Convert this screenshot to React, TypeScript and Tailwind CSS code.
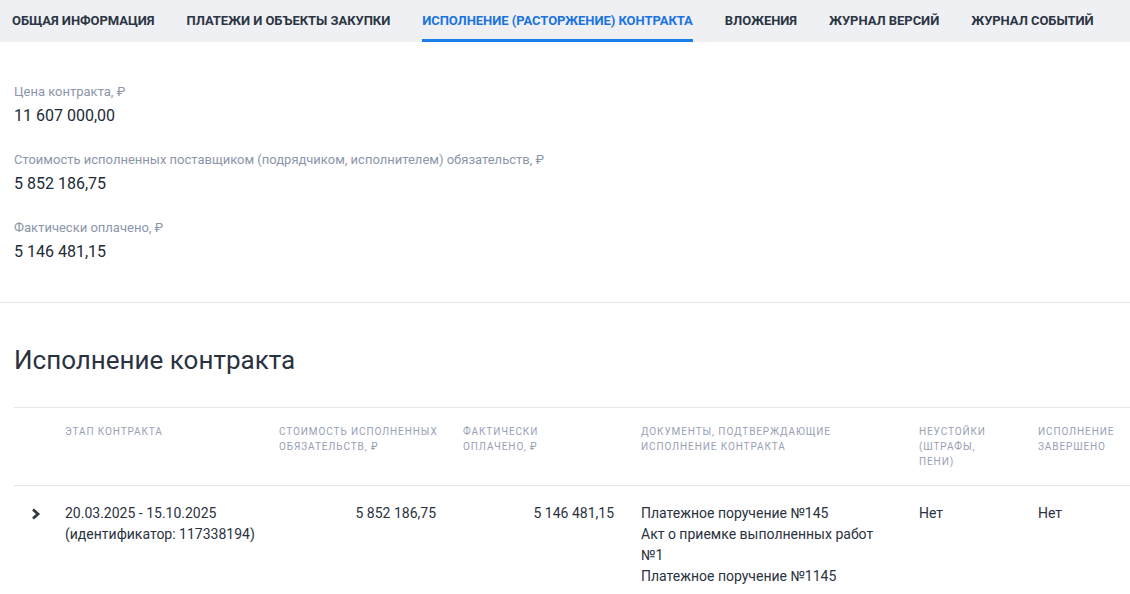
const TABS = [
  "Общая информация",
  "Платежи и объекты закупки",
  "Исполнение (расторжение) контракта",
  "Вложения",
  "Журнал версий",
  "Журнал событий",
];

const SUMMARY = [
  { label: "Цена контракта, ₽", value: "11 607 000,00" },
  { label: "Стоимость исполненных поставщиком (подрядчиком, исполнителем) обязательств, ₽", value: "5 852 186,75" },
  { label: "Фактически оплачено, ₽", value: "5 146 481,15" },
];

const COLS = "grid grid-cols-[51px_214px_184px_178px_278px_119px_1fr]";

export default function App() {
  return (
    <div className="w-[1130px] h-[594px] overflow-hidden bg-white text-[#212b36]" style={{ fontFamily: "Roboto, 'Liberation Sans', sans-serif" }}>
      <div className="flex h-[42px] bg-[#eef0f3] pl-[12px] gap-[32px]">
        {TABS.map((t, i) => (
          <div
            key={t}
            className={`flex items-center h-full whitespace-nowrap text-[13px] font-bold uppercase tracking-[-0.05px] border-b-[3px] pt-[3px] ${
              i === 2 ? "text-[#1a73e0] border-[#1a7ee6]" : "text-[#2c3543] border-transparent"
            }`}
          >
            {t}
          </div>
        ))}
      </div>

      <div className="px-[14px] pt-[41px] pb-[38px] border-b border-[#e4e6ee] flex flex-col gap-[23px]">
        {SUMMARY.map((s) => (
          <div key={s.label}>
            <div className="text-[13px] leading-[18px] text-[#8c96ab]">{s.label}</div>
            <div className="mt-[3px] text-[16px] leading-[24px]">{s.value}</div>
          </div>
        ))}
      </div>

      <div className="pl-[14px]">
        <h2 className="mt-[41px] text-[26px] leading-[32px] text-[#2a3240]">Исполнение контракта</h2>

        <div className="mt-[31px] border-t border-[#e4e6ee]">
          <div className={`${COLS} pt-[16px] pb-[16px] border-b border-[#e4e6ee] text-[10px] leading-[15px] uppercase tracking-[0.9px] text-[#98a0b6]`}>
            <div />
            <div>Этап контракта</div>
            <div className="pr-[20px]">Стоимость исполненных обязательств, ₽</div>
            <div className="pr-[60px]">Фактически оплачено, ₽</div>
            <div className="pr-[50px]">Документы, подтверждающие исполнение контракта</div>
            <div className="pr-[50px]">Неустойки (штрафы, пени)</div>
            <div className="pr-[10px]">Исполнение завершено</div>
          </div>

          <div className={`${COLS} pt-[17px] text-[14px] leading-[21px] text-[#2a3240]`}>
            <div className="flex justify-center pt-[2px]">
              <svg width="14" height="18" viewBox="0 0 14 18" className="ml-[-7px]">
                <path d="M4 4.5 L9 9 L4 13.5" fill="none" stroke="#2f3640" strokeWidth="2.8" />
              </svg>
            </div>
            <div>
              20.03.2025 - 15.10.2025
              <br />
              (идентификатор: 117338194)
            </div>
            <div className="text-right pr-[27px]">5 852 186,75</div>
            <div className="text-right pr-[27px]">5 146 481,15</div>
            <div className="pr-[40px]">
              <div>Платежное поручение №145</div>
              <div>Акт о приемке выполненных работ №1</div>
              <div>Платежное поручение №1145</div>
            </div>
            <div>Нет</div>
            <div>Нет</div>
          </div>
        </div>
      </div>
    </div>
  );
}
